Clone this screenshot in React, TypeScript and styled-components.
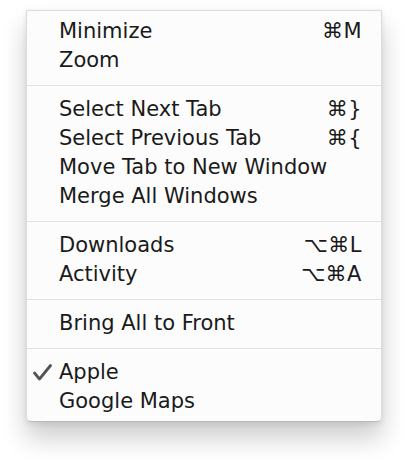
import React from "react";
import styled, { createGlobalStyle } from "styled-components";

const Global = createGlobalStyle`
  html, body { margin: 0; padding: 0; background: #ffffff; }
  body { font-family: "DejaVu Sans", "Liberation Sans", sans-serif; }
`;

const Page = styled.div`
  width: 408px;
  height: 464px;
  padding: 10px 0 0 26px;
  box-sizing: border-box;
`;

const Menu = styled.div`
  width: 356px;
  box-sizing: border-box;
  background: #fcfcfc;
  border: 1px solid #dcdcdc;
  border-bottom-color: #b8b8b8;
  border-radius: 0 0 5px 5px;
  padding: 6px 0 5px;
  box-shadow: 0 16px 26px rgba(0, 0, 0, 0.2), 0 2px 6px rgba(0, 0, 0, 0.08);
  display: flex;
  flex-direction: column;
`;

const Row = styled.div`
  height: 29px;
  line-height: 29px;
  font-size: 21px;
  color: #1a1a1a;
  display: grid;
  grid-template-columns: 32px 1fr auto;
  align-items: center;
  padding-right: 19px;
  white-space: nowrap;
`;

const Check = styled.span`
  display: flex;
  justify-content: flex-end;
  padding-right: 7px;
  height: 29px;
  align-items: center;
`;

const Label = styled.span``;

const Shortcut = styled.span`
  text-align: right;
  letter-spacing: 0.5px;
`;

const Separator = styled.div`
  height: 1px;
  background: #e2e2e2;
  margin: 10px 0 9px;
`;

type Item = { label: string; shortcut?: string; checked?: boolean };

const groups: Item[][] = [
  [
    { label: "Minimize", shortcut: "⌘M" },
    { label: "Zoom" },
  ],
  [
    { label: "Select Next Tab", shortcut: "⌘}" },
    { label: "Select Previous Tab", shortcut: "⌘{" },
    { label: "Move Tab to New Window" },
    { label: "Merge All Windows" },
  ],
  [
    { label: "Downloads", shortcut: "⌥⌘L" },
    { label: "Activity", shortcut: "⌥⌘A" },
  ],
  [{ label: "Bring All to Front" }],
  [{ label: "Apple", checked: true }, { label: "Google Maps" }],
];

const CheckIcon = () => (
  <svg width="19" height="17" viewBox="0 0 19 17">
    <path
      d="M1.5 9 L6.5 15 L17.5 1.5"
      fill="none"
      stroke="#555"
      strokeWidth="2.8"
      strokeLinecap="round"
      strokeLinejoin="round"
    />
  </svg>
);

export default function App() {
  return (
    <>
      <Global />
      <Page>
        <Menu>
          {groups.map((g, gi) => (
            <React.Fragment key={gi}>
              {gi > 0 && <Separator />}
              {g.map((it) => (
                <Row key={it.label}>
                  <Check>{it.checked ? <CheckIcon /> : null}</Check>
                  <Label>{it.label}</Label>
                  <Shortcut>{it.shortcut ?? ""}</Shortcut>
                </Row>
              ))}
            </React.Fragment>
          ))}
        </Menu>
      </Page>
    </>
  );
}
